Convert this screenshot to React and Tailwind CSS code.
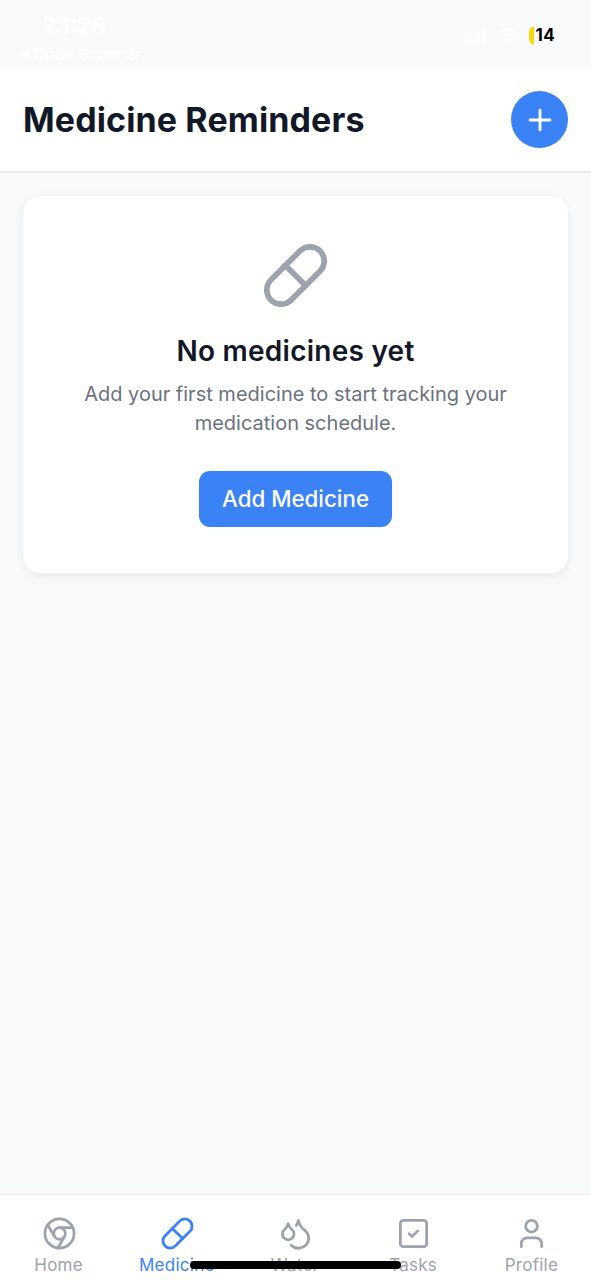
import { Pill, Plus, Droplets, User } from 'lucide-react';

const ChromeIcon = ({ size = 24, strokeWidth = 2 }) => (
  <svg
    width={size}
    height={size}
    viewBox="0 0 24 24"
    fill="none"
    stroke="currentColor"
    strokeWidth={strokeWidth}
    strokeLinecap="round"
    strokeLinejoin="round"
  >
    <circle cx="12" cy="12" r="10" />
    <circle cx="12" cy="12" r="4" />
    <path d="M21.17 8H12" />
    <path d="M3.95 6.06 8.54 14" />
    <path d="M10.88 21.94 15.46 14" />
  </svg>
);

const TaskIcon = ({ size = 24, strokeWidth = 2 }) => (
  <svg
    width={size}
    height={size}
    viewBox="0 0 24 24"
    fill="none"
    stroke="currentColor"
    strokeWidth={strokeWidth}
    strokeLinecap="round"
    strokeLinejoin="round"
  >
    <rect x="3" y="3" width="18" height="18" rx="2" />
    <path d="m9 12.2 2 1.9 4-3.9" />
  </svg>
);

const tabs = [
  { name: 'Home', icon: ChromeIcon },
  { name: 'Medicine', icon: Pill, active: true },
  { name: 'Water', icon: Droplets },
  { name: 'Tasks', icon: TaskIcon },
  { name: 'Profile', icon: User },
];

const StatusBar = () => (
  <div className="flex h-[68px] shrink-0 justify-between bg-[#f9fafb] text-white">
    <div className="pl-[18px] pt-[11px]">
      <div className="pl-6 text-[22.5px] font-semibold leading-[29px]">23:28</div>
      <div className="flex items-center gap-1 pt-1 text-[16px] font-medium leading-[20px]">
        <svg width="11" height="11" viewBox="0 0 10 10" fill="currentColor">
          <path d="M0 5 10 0v10z" />
        </svg>
        Code Scanner
      </div>
    </div>
    <div className="flex h-[71px] items-center pr-[28px]">
      <svg width="24" height="16" viewBox="0 0 24 16" fill="currentColor">
        <rect x="0" y="10" width="4" height="6" rx="1" />
        <rect x="6" y="7" width="4" height="9" rx="1" />
        <rect x="12" y="4" width="4" height="12" rx="1" />
        <rect x="18" y="0" width="4" height="16" rx="1" />
      </svg>
      <svg className="ml-2.5" width="22" height="16" viewBox="0 0 22 16" fill="none" stroke="currentColor" strokeWidth="3">
        <path d="M1.5 6a13.5 13.5 0 0 1 19 0" />
        <path d="M5 10a8.5 8.5 0 0 1 12 0" />
        <path d="m8 12.5 3 3 3-3a4.5 4.5 0 0 0-6 0z" fill="currentColor" stroke="none" />
      </svg>
      <div className="ml-[9px] flex h-[19px] w-[34px] items-center overflow-hidden rounded-[6px] bg-[#fafbfc]">
        <div className="h-full w-[5px] bg-[#fad90a]" />
        <span className="ml-[1.5px] text-[17px] font-bold leading-none tracking-[0.5px] text-black">14</span>
      </div>
    </div>
  </div>
);

const TabBar = () => (
  <nav className="relative flex h-[86px] shrink-0 border-t border-[#e9ebef] bg-white">
    {tabs.map(({ name, icon: Icon, active }) => (
      <div
        key={name}
        className={`flex flex-1 flex-col items-center pt-[21px] ${
          active ? 'text-[#3b82f6]' : 'text-[#9ca3af]'
        }`}
      >
        <Icon size={35} strokeWidth={1.9} />
        <span className="mt-[3px] pr-px text-[17px] leading-[22px] tracking-[0.25px]">{name}</span>
      </div>
    ))}
    {/* home indicator */}
    <div className="absolute left-[190px] top-[66px] h-[7.5px] w-[211px] rounded-full bg-black" />
  </nav>
);

const App = () => {
  return (
    <div className="flex h-[1280px] w-full flex-col overflow-hidden bg-[#f9fafb] font-['Inter',sans-serif]">
      <StatusBar />

      <header className="flex h-[105px] shrink-0 items-center justify-between border-b-2 border-[#e9eaec] bg-white px-[23px]">
        <h1 className="text-[34px] font-bold leading-[42px] tracking-[0.12px] text-[#111827]">Medicine Reminders</h1>
        <button className="flex size-[57px] items-center justify-center rounded-full bg-[#3b82f6] text-white">
          <Plus size={34} />
        </button>
      </header>

      <main className="flex-1 px-[23px] pt-[23px]">
        <div className="flex h-[377px] flex-col items-center rounded-[17px] bg-white pt-[45px] text-center shadow-[0_3px_11px_rgba(0,0,0,0.08)]">
          <Pill size={69} className="text-[#9ca3af]" />
          <h2 className="mt-[23px] text-[28px] font-semibold leading-[36px] tracking-[0.25px] text-[#111827]">No medicines yet</h2>
          <p className="mt-[11px] w-[440px] text-[20px] leading-[28.5px] text-[#6b7280]">
            Add your first medicine to start tracking your medication schedule.
          </p>
          <button className="mt-[34px] h-[56px] w-[193px] rounded-[11px] bg-[#3b82f6] text-[22.3px] font-medium text-white">
            Add Medicine
          </button>
        </div>
      </main>

      <TabBar />
    </div>
  );
};

export default App;
